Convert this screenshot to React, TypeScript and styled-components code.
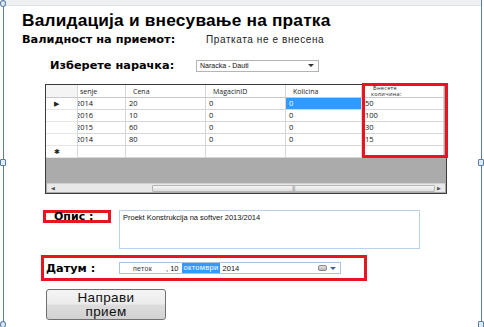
import React from "react";
import styled, { createGlobalStyle } from "styled-components";

const Global = createGlobalStyle`
  html, body { margin: 0; padding: 0; background: #ffffff; }
  body { font-family: "Liberation Sans", Arial, sans-serif; color: #000; }
  * { box-sizing: border-box; }
`;

const Stage = styled.div`
  position: relative;
  width: 484px;
  height: 327px;
  overflow: hidden;
  background: #fff;
`;

const Win = styled.div`
  margin-left: 3px;
  width: 479px;
  height: 327px;
  border-left: 1px solid #5a7ca6;
  border-right: 1px solid #5a7ca6;
  display: flex;
  flex-direction: column;
`;

const TopBand = styled.div`
  height: 6px;
  background: #eef0f2;
  border-bottom: 1px solid #dfe3e8;
  flex: none;
`;

const Content = styled.div`
  display: flex;
  flex-direction: column;
  padding-left: 18px;
`;

const Title = styled.h1`
  margin: 5px 0 0 0;
  font-size: 17.3px;
  line-height: 19px;
  font-weight: bold;
  letter-spacing: 0.2px;
`;

const Row = styled.div<{ $mt: number; $ml?: number }>`
  display: flex;
  align-items: center;
  margin-top: ${(p) => p.$mt}px;
  margin-left: ${(p) => p.$ml ?? 0}px;
`;

const BoldLabel = styled.span<{ $w?: number }>`
  font-family: "DejaVu Sans", "Liberation Sans", sans-serif;
  font-weight: bold;
  font-size: 11.3px;
  line-height: 13px;
  ${(p) => (p.$w ? `width: ${p.$w}px; flex: none;` : "")}
`;

const Value = styled.span`
  font-size: 10px;
  line-height: 12px;
  letter-spacing: 0.6px;
  color: #222;
`;

const Combo = styled.div`
  width: 123px;
  height: 12px;
  border: 1px solid #b4b4b4;
  display: flex;
  align-items: center;
  justify-content: space-between;
  padding: 0 4px 0 3px;
  font-size: 7px;
  color: #111;
`;

const Arrow = styled.span`
  width: 0;
  height: 0;
  border-left: 3px solid transparent;
  border-right: 3px solid transparent;
  border-top: 3px solid #333;
`;

const GridWrap = styled.div`
  position: relative;
  margin-top: 12px;
  margin-left: 23px;
  width: 402px;
  height: 110px;
  border: 1px solid #3a3a3a;
  background: #ababab;
  display: flex;
  flex-direction: column;
`;

const Table = styled.div`
  display: grid;
  grid-template-columns: 32px 48px 80px 80px 76px 82px;
  grid-auto-rows: 12px;
  grid-template-rows: 13px;
  width: 398px;
  background: #fff;
`;

const HeadCell = styled.div<{ $corner?: boolean }>`
  background: ${(p) => (p.$corner ? "#f4f4f4" : "#fff")};
  border-right: 1px solid #d6d6d6;
  border-bottom: 1px solid #c8c8c8;
  font-family: "Open Sans", "Liberation Sans", sans-serif;
  font-size: 7px;
  line-height: 7px;
  color: #222;
  padding: 3px 0 0 7px;
  overflow: hidden;
  white-space: nowrap;
`;

const HeadTwo = styled(HeadCell)`
  padding: 0 0 0 9px;
  font-size: 5.6px;
  line-height: 6px;
  letter-spacing: 0.3px;
`;

const HeadLine = styled.span<{ $indent?: number }>`
  display: block;
  height: 6px;
  padding-left: ${(p) => p.$indent ?? 0}px;
`;

const RowHead = styled.div`
  background: #fff;
  border-right: 1px solid #d6d6d6;
  border-bottom: 1px solid #e6e6e6;
  display: flex;
  align-items: center;
  padding-left: 8px;
  font-size: 7px;
  color: #222;
`;

const Cell = styled.div<{ $sel?: boolean }>`
  background: ${(p) => (p.$sel ? "#3399ff" : "#fff")};
  color: ${(p) => (p.$sel ? "#fff" : "#111")};
  border-right: 1px solid #d6d6d6;
  border-bottom: 1px solid #d6d6d6;
  font-family: "Open Sans", "Liberation Sans", sans-serif;
  font-size: 7.5px;
  line-height: 11px;
  padding-left: 3px;
  overflow: hidden;
  white-space: nowrap;
`;

const Shift = styled.span`
  display: inline-block;
  margin-left: -5px;
`;

const GrayFill = styled.div`
  flex: 1;
`;

const HScroll = styled.div`
  height: 9px;
  margin: 0 1px 1px 1px;
  background: #e8e8e8;
  border-top: 1px solid #d0d0d0;
  display: flex;
  align-items: center;
  padding: 0 2px;
  font-size: 5px;
  color: #555;
`;

const Thumb = styled.div`
  margin-left: 95px;
  width: 284px;
  height: 7px;
  border: 1px solid #b5b5b5;
  border-radius: 1px;
  background: linear-gradient(#f6f6f6, #dedede);
  display: flex;
  align-items: center;
  justify-content: center;
  font-size: 5px;
  color: #777;
  letter-spacing: -0.5px;
`;

const ScrollArrow = styled.span<{ $end?: boolean }>`
  width: 8px;
  text-align: center;
  margin-left: ${(p) => (p.$end ? "auto" : "0")};
`;

const RedGridMark = styled.div`
  position: absolute;
  left: 316px;
  top: -2px;
  width: 86px;
  height: 75px;
  border: 3px solid #e8141f;
  pointer-events: none;
`;

const OpisRow = styled.div`
  display: flex;
  align-items: flex-start;
  margin-top: 16px;
  margin-left: 21px;
`;

const OpisLabel = styled.div`
  width: 68px;
  height: 13px;
  border: 3px solid #e8141f;
  font-family: "DejaVu Sans", "Liberation Sans", sans-serif;
  font-weight: bold;
  font-size: 11px;
  line-height: 7px;
  padding-left: 8px;
  flex: none;
`;

const TextBox = styled.div`
  margin-left: 8px;
  width: 301px;
  height: 39px;
  border: 1px solid #b9d1ea;
  font-size: 7.5px;
  padding: 2px 3px;
  color: #111;
`;

const DatumBox = styled.div`
  margin-top: 6px;
  margin-left: 19px;
  width: 326px;
  height: 26px;
  border: 3px solid #e8141f;
  display: flex;
  align-items: center;
  padding-left: 2px;
`;

const Picker = styled.div`
  margin-left: auto;
  margin-right: 23px;
  width: 222px;
  height: 12px;
  border: 1px solid #a9c3df;
  display: flex;
  align-items: center;
  font-size: 7.5px;
  color: #111;
  padding-left: 13px;
`;

const Weekday = styled.span`
  color: #333;
  width: 33px;
  font-size: 7px;
  letter-spacing: 0.3px;
`;

const Hi = styled.span`
  background: #3399ff;
  color: #fff;
  padding: 0 2px;
  margin-left: 3px;
  line-height: 10px;
  letter-spacing: 0.3px;
`;

const CalIcon = styled.span`
  margin-left: auto;
  width: 9px;
  height: 6px;
  border: 1px solid #8a8a8a;
  border-radius: 2px;
  background: linear-gradient(#e4e4e4, #b8b8b8);
`;

const PickArrow = styled(Arrow)`
  margin: 0 4px 0 3px;
  border-top-color: #3a5f9a;
`;

const Button = styled.button`
  margin-top: 8px;
  margin-left: 24px;
  width: 120px;
  height: 31px;
  border: 1px solid #707070;
  border-radius: 3px;
  background: linear-gradient(#f4f4f4 0%, #ececec 48%, #dcdcdc 52%, #d2d2d2 100%);
  font-family: "Liberation Sans", Arial, sans-serif;
  font-size: 13.5px;
  line-height: 14px;
  color: #111;
  padding: 0;
  letter-spacing: 0.4px;
`;

const Handle = styled.div<{ $x: number; $y: number; $round?: boolean }>`
  position: absolute;
  left: ${(p) => p.$x}px;
  top: ${(p) => p.$y}px;
  width: 6px;
  height: 7px;
  background: #dcecf8;
  border: 1px solid #5a7ca6;
  border-radius: ${(p) => (p.$round ? "50%" : "1px")};
`;

const rows = [
  { d: "2014", c: "20", m: "0", k: "0", v: "50", arrow: true },
  { d: "2016", c: "10", m: "0", k: "0", v: "100" },
  { d: "2015", c: "60", m: "0", k: "0", v: "30" },
  { d: "2014", c: "80", m: "0", k: "0", v: "15" },
];

export default function App() {
  return (
    <Stage>
      <Global />
      <Win>
        <TopBand />
        <Content>
          <Title>Валидација и внесување на пратка</Title>
          <Row $mt={3}>
            <BoldLabel $w={184}>Валидност на приемот:</BoldLabel>
            <Value>Пратката не е внесена</Value>
          </Row>
          <Row $mt={13} $ml={28}>
            <BoldLabel $w={146}>Изберете нарачка:</BoldLabel>
            <Combo>
              <span>Naracka - Dauti</span>
              <Arrow />
            </Combo>
          </Row>
          <GridWrap>
            <Table>
              <HeadCell $corner />
              <HeadCell>
                <Shift>senje</Shift>
              </HeadCell>
              <HeadCell>Cena</HeadCell>
              <HeadCell>MagacinID</HeadCell>
              <HeadCell>Kolicina</HeadCell>
              <HeadTwo>
                <HeadLine $indent={2}>Внесете</HeadLine>
                <HeadLine>количина:</HeadLine>
              </HeadTwo>
              {rows.map((r, i) => (
                <React.Fragment key={i}>
                  <RowHead>{r.arrow ? "▶" : ""}</RowHead>
                  <Cell>
                    <Shift>{r.d}</Shift>
                  </Cell>
                  <Cell>{r.c}</Cell>
                  <Cell>{r.m}</Cell>
                  <Cell $sel={i === 0}>{r.k}</Cell>
                  <Cell>{r.v}</Cell>
                </React.Fragment>
              ))}
              <RowHead>✱</RowHead>
              <Cell />
              <Cell />
              <Cell />
              <Cell />
              <Cell />
            </Table>
            <GrayFill />
            <HScroll>
              <ScrollArrow>◀</ScrollArrow>
              <Thumb>|||</Thumb>
              <ScrollArrow $end>▶</ScrollArrow>
            </HScroll>
            <RedGridMark />
          </GridWrap>
          <OpisRow>
            <OpisLabel>Опис :</OpisLabel>
            <TextBox>Proekt Konstrukcija na softver 2013/2014</TextBox>
          </OpisRow>
          <DatumBox>
            <BoldLabel>Датум :</BoldLabel>
            <Picker>
              <Weekday>петок</Weekday>
              <span>, 10</span>
              <Hi>октомври</Hi>
              <span>&nbsp;2014</span>
              <CalIcon />
              <PickArrow />
            </Picker>
          </DatumBox>
          <Button>
            Направи
            <br />
            прием
          </Button>
        </Content>
      </Win>
      <Handle $x={0} $y={0} $round />
      <Handle $x={0} $y={159} />
      <Handle $x={478} $y={159} />
      <Handle $x={0} $y={321} $round />
      <Handle $x={478} $y={321} />
    </Stage>
  );
}
